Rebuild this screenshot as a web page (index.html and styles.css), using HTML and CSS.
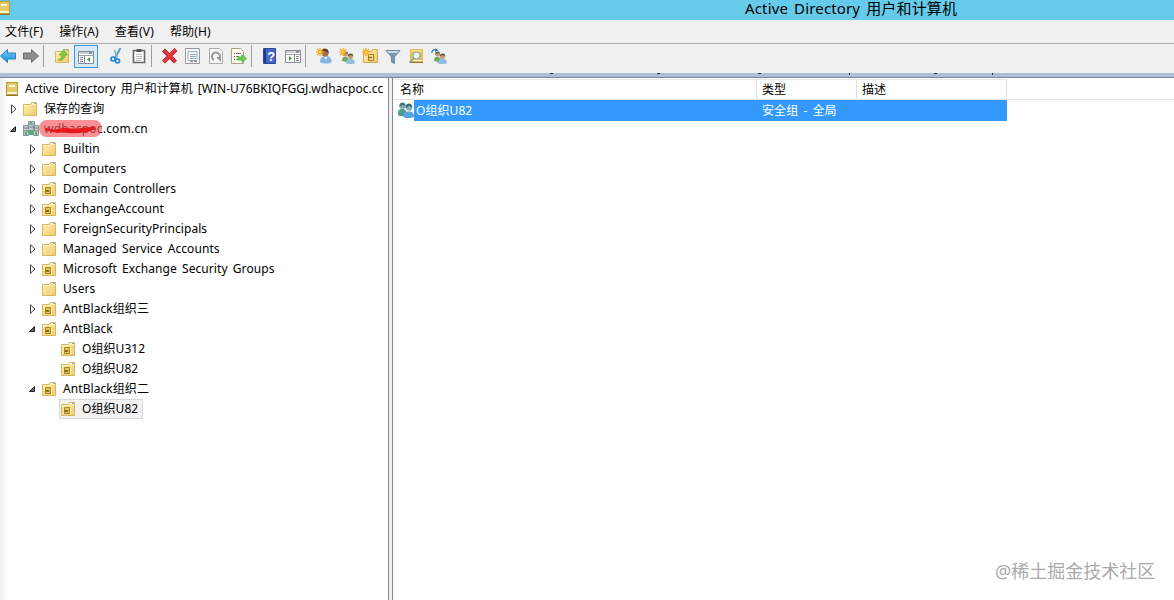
FILE: index.html
```html
<!DOCTYPE html>
<html lang="zh-CN">
<head>
    <meta charset="UTF-8">
    <title>Active Directory 用户和计算机</title>
    <link rel="stylesheet" href="styles.css">
</head>
<body>
    <svg class="defs" width="0" height="0">
        <linearGradient id="gold" x2="1" y2="1"><stop offset="0" stop-color="#fff0b0"/><stop offset="1" stop-color="#f0cb70"/></linearGradient>
        <linearGradient id="blue" x2="0" y2="1"><stop offset="0" stop-color="#73c8fa"/><stop offset="1" stop-color="#168ee0"/></linearGradient>
        <symbol id="book" viewBox="0 0 16 16">
            <path d="M2 1h12v14H2z" fill="#b89a3c"/>
            <path d="M3 2h10v9H3z" fill="#e4c967"/>
            <path d="M5 4h6v2H5z" fill="#fffbe0"/>
            <path d="M3 11h10v2H3z" fill="#fff7ce"/>
            <path d="M2 14h12v1H2z" fill="#8e7328"/>
        </symbol>
        <symbol id="folder" viewBox="0 0 16 16">
            <path d="M1.500 3.500h7l1-2h5v13h-13z" fill="url(#gold)" stroke="#d9b660"/>
            <path d="M10 2.500h4" stroke="#fff"/>
            <path d="M12 2.500h2" stroke="#7fa7c8"/>
            <path d="M2 4.500h7l1-1h4" fill="none" stroke="#fff3bd"/>
        </symbol>
        <symbol id="ou" viewBox="0 0 16 16">
            <use href="#folder"/>
            <path d="M4.500 6.500h5v6h-5z" fill="#e9c44e" stroke="#a5832d"/>
            <path d="M5 9h3v2H5z" fill="#86681f"/>
            <path d="M10.500 7v6" stroke="#fff4c4"/>
        </symbol>
        <symbol id="domain" viewBox="0 0 16 16">
            <path d="M5.500.500h6v9h-6zM.5 4.500h5v10h-5zM10.500 4.500h5v10h-5z" fill="#c3cfce" stroke="#85979a"/>
            <path d="M6 3h5M6 6h5M1 7h4M1 10h4M11 7h4M11 10h4" stroke="#70878a"/>
            <path d="M7 1h2v2H7zM6 9h4v5H6zM2 11h2v3H2zM12 11h2v3h-2z" fill="#58aa7b"/>
        </symbol>
        <symbol id="closed" viewBox="0 0 10 10"><path d="M3.500.800v8.400L8 5z" fill="#fff" stroke="#454545"/></symbol>
        <symbol id="open" viewBox="0 0 10 10"><path d="M7.500 2.500v5h-5z" fill="#666" stroke="#222"/></symbol>
        <symbol id="arrow" viewBox="0 0 16 16"><path d="M.5 8l7-6.500V5h8v6h-8v3.500z"/></symbol>
        <symbol id="people" viewBox="0 0 16 16">
            <path d="M0 12c0-4 2-5 4-5s4 1 5 5l-3 2z" fill="#72aa62"/>
            <circle cx="4.500" cy="4" r="3" fill="#c69a72"/>
            <path d="M1.500 4c0-4.500 6-4.500 6-.5L5 2.800z" fill="#5d6655"/>
            <path d="M5 15c0-4 2-5.500 5.500-5.500S16 11 16 15c-3 1.500-8 1.500-11 0z" fill="#8fbde2"/>
            <circle cx="10.500" cy="6.500" r="3.200" fill="#c69774"/>
            <path d="M7.300 6.500c0-4.500 6.500-4.500 6.500-.5l-3-1z" fill="#5a5145"/>
        </symbol>
        <symbol id="group" viewBox="0 0 16 16">
            <path d="M0 12c0-4 1-5 4-5s4 1 5 5v2H1z" fill="#4d9a91"/>
            <circle cx="4.500" cy="4" r="3" fill="#7fadb2"/>
            <path d="M1.300 5c-.5-6 6.500-6 6.500-.5L4.500 2.800z" fill="#3f6f79"/>
            <path d="M5 15c0-4 2-5.500 5.500-5.500S16 11 16 15c-3 1.500-8 1.500-11 0z" fill="#5ca4dd"/>
            <circle cx="11" cy="5.500" r="3.200" fill="#84b0bd"/>
            <path d="M7.600 6.500C7 0 14.500 0 14.300 6l-3-2.500z" fill="#39657a"/>
        </symbol>
        <symbol id="spark" viewBox="0 0 8 8"><path d="M4 0v8M0 4h8M1 1l6 6M7 1L1 7" stroke="#f0a51d" stroke-width="1.200"/><circle cx="4" cy="4" r="1.600" fill="#ffcf4a"/></symbol>
        <symbol id="window" viewBox="0 0 16 16">
            <path d="M.5 2.500h15v12H.5z" fill="#fff" stroke="#858b93"/>
            <path d="M1 4h14M1 6.500h14" stroke="#9da4ac"/>
            <path d="M11 4h3" stroke="#4c5360"/>
        </symbol>
    </svg>

    <div class="titlebar">
        <svg class="title-icon"><use href="#book"/></svg>
        <span class="title">Active Directory 用户和计算机</span>
    </div>

    <div class="menubar">
        <span class="menu">文件(F)</span>
        <span class="menu">操作(A)</span>
        <span class="menu">查看(V)</span>
        <span class="menu">帮助(H)</span>
    </div>

    <div class="toolbar">
        <svg class="tool" viewBox="0 0 16 16"><use href="#arrow" fill="url(#blue)" stroke="#2282bd"/></svg>
        <svg class="tool" viewBox="0 0 16 16"><g transform="matrix(-1 0 0 1 16 0)"><use href="#arrow" fill="#8d8d8d" stroke="#6d6d6d"/></g></svg>
        <i class="sep"></i>
        <svg class="tool" viewBox="0 0 16 16"><use href="#folder"/><path d="M4 12c3-1 4-3 4-5H5l5-5.500L13.500 7H11c0 4-3 6-7 5z" fill="#82cb3c" stroke="#58a52b" stroke-width=".6"/></svg>
        <span class="tool-active"><svg viewBox="0 0 16 16"><use href="#window"/><path d="M6.500 7v7" stroke="#858b93"/><path d="M2 8.500h3M2 10.500h3M2 12.500h3" stroke="#6c87ae"/><path d="M12 8v5L9 10.500z" fill="#36a936"/></svg></span>
        <svg class="tool" viewBox="0 0 16 16"><path d="M12.500 0L7 10" stroke="#5b9cc4" stroke-width="2"/><path d="M6.500 2L9.500 11" stroke="#85aac3" stroke-width="1.500"/><circle cx="5" cy="11" r="2" fill="none" stroke="#1681d6" stroke-width="1.600"/><circle cx="9.500" cy="13" r="2" fill="none" stroke="#1681d6" stroke-width="1.600"/></svg>
        <svg class="tool" viewBox="0 0 16 16"><path d="M2.500 2.500h11v12h-11z" fill="#fff" stroke="#666" stroke-width="1.600"/><path d="M5.500 1h5v3h-5z" fill="#555"/><path d="M5 6.500h6M5 8.500h6M5 10.500h6M5 12.500h5" stroke="#bbb"/></svg>
        <i class="sep"></i>
        <svg class="tool" viewBox="0 0 16 16"><path d="M1.500 2l12 12M14 1.500L1.500 14" stroke="#b91b20" stroke-width="4"/><path d="M2 2l11.500 12M13.500 1.500L1.500 14" stroke="#e8343a" stroke-width="2.600"/></svg>
        <svg class="tool" viewBox="0 0 16 16"><path d="M.5.500h14v15H.5z" fill="#fafafa" stroke="#999"/><path d="M3 3.500h9v9H3zM5 6.500h6M5 8.500h6M5 10.500h6" fill="none" stroke="#9daebd"/><path d="M5 13.500h3M9 13.500h3" stroke="#888"/></svg>
        <svg class="tool" viewBox="0 0 16 16"><path d="M1.500.500h10l3 3v12h-13z" fill="#fafafa" stroke="#aaa"/><path d="M6 12A4 4 0 1 1 11 11" fill="none" stroke="#999" stroke-width="2"/><path d="M8 9h5v5z" fill="#999"/></svg>
        <svg class="tool" viewBox="0 0 16 16"><path d="M.5.500h9l3 3v12H.5z" fill="#fffdf0" stroke="#aaa386"/><path d="M3 5.500h1M3 8.500h1M3 11.500h1M5 5.500h5M5 8.500h3M5 11.500h3" stroke="#777"/><path d="M7 9h4V6.500l4.500 4-4.500 4V12H7z" fill="#65d34b" stroke="#39a834" stroke-width=".7"/></svg>
        <i class="sep"></i>
        <svg class="tool" viewBox="0 0 16 16"><path d="M1.500.500h12v15h-12z" fill="#4668cb" stroke="#2e489e"/><path d="M2 1h2v14H2z" fill="#213a91"/><text x="5.200" y="12.500" class="help-mark">?</text></svg>
        <svg class="tool" viewBox="0 0 16 16"><use href="#window"/><path d="M9.500 7v7" stroke="#858b93"/><path d="M11 8.500h3M11 10.500h3M11 12.500h3" stroke="#888"/><path d="M4 8v5l3-2.500z" fill="#36a936"/></svg>
        <i class="sep"></i>
        <svg class="tool" viewBox="0 0 16 16"><path d="M4 14c0-4 2-6 6-6s6 3 5.500 6c-2 2-9 2-11.500 0z" fill="#86b5df"/><circle cx="9" cy="5" r="3.600" fill="#a46a4a"/><path d="M5.500 3c1-4 8-3 7 2l-3-2z" fill="#5b3b2c"/><path d="M8 9l2 3 1-3z" fill="#fff"/><use href="#spark" width="8" height="8"/></svg>
        <svg class="tool" viewBox="0 0 16 16"><use href="#people" x="3" y="3" width="13" height="13"/><use href="#spark" width="8" height="8"/></svg>
        <svg class="tool" viewBox="0 0 16 16"><path d="M1.500 3.500h8l1-2h5v13h-14z" fill="url(#gold)" stroke="#d2a84c"/><path d="M6.500 6.500h5v6h-5z" fill="#f9e28a" stroke="#a17c23"/><path d="M7 9.500h3" stroke="#8e701d" stroke-width="1.500"/><use href="#spark" width="8" height="8"/></svg>
        <svg class="tool" viewBox="0 0 16 16"><path d="M1 2.500h14L9.500 9v6.500l-3-1.500V9z" fill="#7798b2" stroke="#6b8aa1"/><path d="M2 3h12l-2 2H4z" fill="#c9dce8"/></svg>
        <svg class="tool" viewBox="0 0 16 16"><path d="M2 1h13v14H2z" fill="#dfc05a"/><path d="M3 2h11v2H3z" fill="#efd883"/><path d="M3 12h11v1H3z" fill="#fff7ce"/><path d="M2 14h13v1H2z" fill="#8e7328"/><circle cx="8.500" cy="7.500" r="3.500" fill="#e9f5f9" stroke="#8fa2ab"/><path d="M6 10.500L1.500 14.500" stroke="#8b98a2" stroke-width="1.600"/></svg>
        <svg class="tool" viewBox="0 0 16 16"><use href="#people" x="3" y="3" width="13" height="13"/><path d="M.8 5C.8 2 3 1 5.500 2" fill="none" stroke="#2b78b9" stroke-width="1.300"/><path d="M4.500 0l2.800 2.500L4 4z" fill="#2b78b9"/></svg>
    </div>

    <div class="band">
        <svg width="1174" height="4"><path d="M550 .5h3M657 .5h3M758 .5h3M849.500 0v2M934 .5h3M992.500 0v2" stroke="#26313d"/></svg>
    </div>

    <div class="panes">
        <div class="tree">
            <div class="node root"><svg class="icon"><use href="#book"/></svg><span class="label root-label">Active Directory 用户和计算机 [WIN-U76BKIQFGGJ.wdhacpoc.cc</span></div>
            <div class="node level1"><svg class="twist"><use href="#closed"/></svg><svg class="icon"><use href="#folder"/></svg><span class="label">保存的查询</span></div>
            <div class="node level1"><svg class="twist"><use href="#open"/></svg><svg class="icon domain-icon"><use href="#domain"/></svg><span class="label domain-label">wdhacpoc.com.cn<svg class="scribble" viewBox="0 0 64 18"><rect width="63" height="17" rx="8" fill="#f4545b" fill-opacity=".65"/><path d="M6 9l9 2 10-2 10 1 10-1 11-1-9 3-13 1-16-1" fill="none" stroke="#e6191d" stroke-width="2.500"/></svg></span></div>
            <div class="node level2"><svg class="twist"><use href="#closed"/></svg><svg class="icon"><use href="#folder"/></svg><span class="label">Builtin</span></div>
            <div class="node level2"><svg class="twist"><use href="#closed"/></svg><svg class="icon"><use href="#folder"/></svg><span class="label">Computers</span></div>
            <div class="node level2"><svg class="twist"><use href="#closed"/></svg><svg class="icon"><use href="#ou"/></svg><span class="label">Domain Controllers</span></div>
            <div class="node level2"><svg class="twist"><use href="#closed"/></svg><svg class="icon"><use href="#ou"/></svg><span class="label">ExchangeAccount</span></div>
            <div class="node level2"><svg class="twist"><use href="#closed"/></svg><svg class="icon"><use href="#folder"/></svg><span class="label">ForeignSecurityPrincipals</span></div>
            <div class="node level2"><svg class="twist"><use href="#closed"/></svg><svg class="icon"><use href="#folder"/></svg><span class="label">Managed Service Accounts</span></div>
            <div class="node level2"><svg class="twist"><use href="#closed"/></svg><svg class="icon"><use href="#ou"/></svg><span class="label">Microsoft Exchange Security Groups</span></div>
            <div class="node level2"><svg class="twist"></svg><svg class="icon"><use href="#folder"/></svg><span class="label">Users</span></div>
            <div class="node level2"><svg class="twist"><use href="#closed"/></svg><svg class="icon"><use href="#ou"/></svg><span class="label">AntBlack组织三</span></div>
            <div class="node level2"><svg class="twist"><use href="#open"/></svg><svg class="icon"><use href="#ou"/></svg><span class="label">AntBlack</span></div>
            <div class="node level3"><svg class="icon"><use href="#ou"/></svg><span class="label">O组织U312</span></div>
            <div class="node level3"><svg class="icon"><use href="#ou"/></svg><span class="label">O组织U82</span></div>
            <div class="node level2"><svg class="twist"><use href="#open"/></svg><svg class="icon"><use href="#ou"/></svg><span class="label">AntBlack组织二</span></div>
            <div class="node level3 current"><svg class="icon"><use href="#ou"/></svg><span class="label">O组织U82</span></div>
        </div>
        <div class="splitter"></div>
        <div class="list">
            <div class="columns">
                <span class="col name">名称</span>
                <span class="col type">类型</span>
                <span class="col desc">描述</span>
            </div>
            <div class="row">
                <svg class="row-icon"><use href="#group"/></svg>
                <span class="row-name">O组织U82</span>
                <span class="row-type">安全组 - 全局</span>
            </div>
        </div>
    </div>
    <div class="watermark">@稀土掘金技术社区</div>
</body>
</html>
```
FILE: styles.css
```css
body {
    margin: 0;
    width: 1174px;
    height: 600px;
    overflow: hidden;
    background: #fff;
    color: #000;
    font-family: "Noto Sans", "Noto Sans CJK SC", sans-serif;
    font-size: 12px;
    letter-spacing: 0.07px;
    word-spacing: 2px;
    display: flex;
    flex-direction: column;
}
svg {
    display: block;
    flex: none;
}
.defs {
    position: absolute;
}
.titlebar {
    height: 20px;
    flex: none;
    background: #66cbea;
    display: flex;
}
.title-icon {
    width: 16px;
    height: 16px;
    margin-left: -4px;
}
.title {
    margin-left: 733px;
    font-size: 15px;
    line-height: 17px;
    letter-spacing: 0.15px;
    white-space: nowrap;
}
.menubar {
    height: 23px;
    flex: none;
    padding-left: 5px;
    background: #f0f0f0;
    display: flex;
    gap: 16px;
    border-bottom: 1px solid #a9aba9;
}
.menu {
    line-height: 23px;
    letter-spacing: 0.15px;
}
.toolbar {
    height: 29px;
    flex: none;
    background: #f0f0f0;
    display: flex;
    align-items: flex-start;
}
.tool {
    width: 16px;
    height: 16px;
    margin: 4px 7px 0 0;
}
.tool-active {
    box-sizing: border-box;
    width: 24px;
    height: 23px;
    margin: 1px 10px 0 -3px;
    padding: 3px;
    border: 1px solid #3c9bdd;
    background: #d8eafa;
}
.tool-active svg {
    width: 16px;
    height: 16px;
}
.sep {
    width: 1px;
    height: 22px;
    margin: 1px 10px 0 -3px;
    background: #9c9c9c;
}
.help-mark {
    font: bold 13px "Liberation Sans", sans-serif;
    fill: #fff;
}
.band {
    height: 4px;
    flex: none;
    background: #a9bfd8;
    border-bottom: 1px solid #77889b;
}
.panes {
    flex: 1;
    display: flex;
}
.tree {
    box-sizing: border-box;
    width: 389px;
    padding-top: 1px;
    overflow: hidden;
    background: linear-gradient(to right, #f0f0f0, #fff 9px);
    border-right: 1px solid #858b92;
}
.splitter {
    width: 3px;
    background: #f0f0f0;
}
.node {
    height: 20px;
    display: flex;
    align-items: center;
}
.root {
    padding-left: 4px;
}
.level1 {
    padding-left: 8px;
}
.level2 {
    padding-left: 27px;
}
.level3 {
    padding-left: 60px;
}
.twist {
    width: 10px;
    height: 10px;
    margin-right: 4px;
}
.icon {
    width: 16px;
    height: 16px;
}
.domain-icon {
    margin: 0 -1px 0 1px;
}
.label {
    position: relative;
    margin-left: 6px;
    line-height: 18px;
    white-space: nowrap;
}
.root-label {
    width: 362px;
    overflow: hidden;
    margin-left: 5px;
    letter-spacing: 0;
}
.domain-label {
    letter-spacing: 0.2px;
}
.scribble {
    position: absolute;
    left: -5px;
    top: 0;
    width: 64px;
    height: 18px;
}
.current {
    box-sizing: border-box;
    width: 84px;
    height: 20px;
    margin-left: 59px;
    padding-left: 0;
    border: 1px solid #d9d9d9;
    background: #f2f2f2;
}
.list {
    flex: 1;
    border-left: 1px solid #858b92;
}
.columns {
    height: 20px;
    display: flex;
    padding-top: 1px;
    border-bottom: 1px solid #e2e2e2;
}
.col {
    box-sizing: border-box;
    padding-left: 5px;
    border-right: 1px solid #dedede;
    border-top: 1px solid #e8e8e8;
    line-height: 20px;
}
.name {
    width: 364px;
    padding-left: 7px;
}
.type {
    width: 100px;
}
.desc {
    width: 150px;
}
.row {
    width: 614px;
    height: 21px;
    display: flex;
    color: #fff;
    line-height: 21px;
}
.row-icon {
    width: 16px;
    height: 16px;
    margin: 2px 0 0 5px;
}
.row-name {
    width: 346px;
    padding-left: 2px;
    background: #3399ff;
}
.row-type {
    flex: 1;
    background: #3399ff;
}
.watermark {
    position: absolute;
    left: 995px;
    top: 559px;
    font-size: 18px;
    line-height: 25px;
    letter-spacing: 0;
    color: #aaa;
    white-space: nowrap;
}
```
